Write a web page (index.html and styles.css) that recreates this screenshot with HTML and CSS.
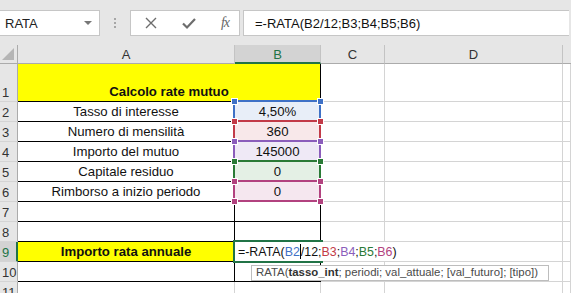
FILE: index.html
```html
<!DOCTYPE html>
<html lang="it">
<head>
  <meta charset="UTF-8">
  <title>Calcolo rate mutuo</title>
  <link rel="stylesheet" href="styles.css">
</head>
<body>
  <div class="bar">
    <div class="namebox">RATA<span class="drop"></span></div>
    <div class="dots"><i></i><i></i><i></i></div>
    <div class="fxbox">
      <svg width="14" height="14" viewBox="0 0 14 14"><path d="M2 2L12 12M12 2L2 12" stroke="#6d6d6d" stroke-width="1.4" fill="none"/></svg>
      <svg width="16" height="14" viewBox="0 0 16 14"><path d="M2 7.5L6 11.5L14 3" stroke="#6d6d6d" stroke-width="2.2" fill="none"/></svg>
      <span class="fx">fx</span>
    </div>
    <div class="formula">=-RATA(B2/12;B3;B4;B5;B6)</div>
  </div>

  <div class="sheet">
    <!-- intestazioni -->
    <div class="corner"><span class="tri"></span></div>
    <div class="ch">A</div>
    <div class="ch sel">B</div>
    <div class="ch">C</div>
    <div class="ch">D</div>
    <div class="ch last"></div>

    <!-- riga 1 -->
    <div class="rh tall">1</div>
    <div class="c span2 center yellow bold bb br">Calcolo rate mutuo</div>
    <div class="c"></div>
    <div class="c"></div>
    <div class="c"></div>

    <!-- righe 2-6 -->
    <div class="rh">2</div>
    <div class="c center bb">Tasso di interesse</div>
    <div class="c center ref blue">4,50%<b class="box"></b><b class="h tl"></b><b class="h tr"></b><b class="h bl"></b><b class="h br2"></b></div>
    <div class="c"></div><div class="c"></div><div class="c"></div>

    <div class="rh">3</div>
    <div class="c center bb">Numero di mensilità</div>
    <div class="c center ref red">360<b class="box"></b><b class="h tl"></b><b class="h tr"></b><b class="h bl"></b><b class="h br2"></b></div>
    <div class="c"></div><div class="c"></div><div class="c"></div>

    <div class="rh">4</div>
    <div class="c center bb">Importo del mutuo</div>
    <div class="c center ref purple">145000<b class="box"></b><b class="h tl"></b><b class="h tr"></b><b class="h bl"></b><b class="h br2"></b></div>
    <div class="c"></div><div class="c"></div><div class="c"></div>

    <div class="rh">5</div>
    <div class="c center bb">Capitale residuo</div>
    <div class="c center ref green">0<b class="box"></b><b class="h tl"></b><b class="h tr"></b><b class="h bl"></b><b class="h br2"></b></div>
    <div class="c"></div><div class="c"></div><div class="c"></div>

    <div class="rh">6</div>
    <div class="c center bb">Rimborso a inizio periodo</div>
    <div class="c center ref magenta">0<b class="box"></b><b class="h tl"></b><b class="h tr"></b><b class="h bl"></b><b class="h br2"></b></div>
    <div class="c"></div><div class="c"></div><div class="c"></div>

    <!-- righe 7-8 -->
    <div class="rh">7</div>
    <div class="c bb br"></div>
    <div class="c bb br"></div>
    <div class="c"></div><div class="c"></div><div class="c"></div>

    <div class="rh">8</div>
    <div class="c bb br"></div>
    <div class="c bb br"></div>
    <div class="c"></div><div class="c"></div><div class="c"></div>

    <!-- riga 9 -->
    <div class="rh act">9</div>
    <div class="c center yellow bold bb br">Importo rata annuale</div>
    <div class="c bb br edit">
      <b class="active"></b>
      <b class="ext"></b>
      <span class="txt">=-RATA(<span class="k1">B2</span><span class="caret"></span>/12;<span class="k2">B3</span>;<span class="k3">B4</span>;<span class="k4">B5</span>;<span class="k5">B6</span>)</span>
      <div class="tip">RATA(<strong>tasso_int</strong>; periodi; val_attuale; [val_futuro]; [tipo])</div>
    </div>
    <div class="c"></div><div class="c"></div><div class="c"></div>

    <!-- riga 10-11 -->
    <div class="rh">10</div>
    <div class="c bb br"></div>
    <div class="c bb br"></div>
    <div class="c"></div><div class="c"></div><div class="c"></div>

    <div class="rh">11</div>
    <div class="c"></div>
    <div class="c"></div>
    <div class="c"></div><div class="c"></div><div class="c"></div>
  </div>
</body>
</html>
```

FILE: styles.css
```css
* { box-sizing: border-box; }
body { margin: 0; background: #e6e6e6; font-family: "Liberation Sans", Arial, sans-serif; width: 571px; height: 293px; overflow: hidden; }

/* barra della formula */
.bar { height: 45px; padding-top: 10px; display: flex; align-items: flex-start; }
.namebox { position: relative; width: 100px; height: 26px; background: #fff; border: 1px solid #c6c6c6; border-left: none; font-size: 13px; color: #222; padding: 5px 0 0 5px; }
.drop { position: absolute; right: 7px; top: 10px; border-left: 4px solid transparent; border-right: 4px solid transparent; border-top: 4px solid #777; }
.dots { width: 30px; height: 26px; display: flex; flex-direction: column; align-items: center; justify-content: center; gap: 2px; }
.dots i { width: 2px; height: 2px; background: #a6a6a6; display: block; }
.fxbox { width: 110px; height: 26px; background: #fff; border: 1px solid #c6c6c6; display: flex; align-items: center; justify-content: space-between; padding: 0 10px 0 13px; }
.fx { font-family: "Liberation Serif", serif; font-style: italic; font-size: 14px; color: #666; letter-spacing: -1px; }
.formula { flex: 1; margin-left: 3px; margin-right: 2px; height: 26px; background: #fff; border: 1px solid #c6c6c6; border-right: none; font-size: 13px; color: #111; padding: 5px 0 0 11px; }

/* foglio */
.sheet { display: grid; grid-template-columns: 18px 217px 86px 64px 178px 8px; grid-template-rows: 19px 38px repeat(10, 20px); background: #fff; }
.corner { position: relative; background: #e6e6e6; border-right: 1px solid #ababab; border-bottom: 1px solid #ababab; }
.tri { position: absolute; right: 3px; bottom: 3px; border-left: 12px solid transparent; border-bottom: 12px solid #b5b5b5; }
.ch { background: #e6e6e6; border-right: 1px solid #c3c3c3; border-bottom: 1px solid #ababab; font-size: 13px; color: #333; text-align: center; padding-top: 2px; }
.ch.sel { background: #d3d3d3; color: #217346; border-bottom: 2px solid #217346; }
.ch.last { border-right: none; }
.rh { background: #e6e6e6; border-right: 1px solid #ababab; border-bottom: 1px solid #d4d4d4; font-size: 13px; color: #333; padding: 3px 0 0 2px; }
.rh.tall { padding-top: 21px; }
.rh.act { background: #d3d3d3; color: #217346; border-right: 2px solid #217346; }

.c { border-right: 1px solid #d4d4d4; border-bottom: 1px solid #d4d4d4; font-size: 13.2px; color: #111; display: flex; align-items: flex-end; padding-bottom: 2px; white-space: nowrap; }
.center { justify-content: center; }
.bold { font-weight: bold; }
.span2 { grid-column: span 2; }
.yellow { background: #ffff00; }
.bb { border-bottom-color: #000; }
.br { border-right-color: #000; }

/* riferimenti colorati */
.ref { position: relative; }
.ref .box { position: absolute; left: -2px; top: -2px; right: -1px; bottom: -1px; border: 2px solid var(--k); }
.ref .h { position: absolute; width: 5px; height: 5px; background: var(--k); box-shadow: 0 0 0 1px #fff; z-index: 1; }
.ref .tl { left: -3px; top: -3px; }
.ref .tr { right: -3px; top: -3px; }
.ref .bl { left: -3px; bottom: -3px; }
.ref .br2 { right: -3px; bottom: -3px; }
.blue { --k: #3f71c6; background: #e8eef8; }
.red { --k: #c23a48; background: #f8e8ea; }
.purple { --k: #8b5dbb; background: #efe9f6; }
.green { --k: #2a7a36; background: #e4f0e5; }
.magenta { --k: #b2427f; background: #f5e7ef; }

/* cella in modifica */
.edit { position: relative; z-index: 2; }
.active { position: absolute; left: -2px; top: -2px; width: 90px; height: 23px; border: 2px solid #217346; }
.ext { position: absolute; left: 84px; top: 0; width: 86px; height: 19px; background: #fff; }
.txt { position: absolute; left: 3px; bottom: 2px; font-size: 12.4px; color: #111; }
.caret { display: inline-block; width: 1px; height: 15px; background: #000; vertical-align: -3px; }
.k1 { color: #3f71c6; }
.k2 { color: #c23a48; }
.k3 { color: #8b5dbb; }
.k4 { color: #2a7a36; }
.k5 { color: #b2427f; }
.tip { position: absolute; left: 16px; top: 23px; width: 298px; height: 16px; background: #fff; border: 1px solid #bdbdbd; font-size: 11.4px; color: #4a4a4a; padding: 0 0 0 4px; white-space: nowrap; }
.tip strong { color: #333; }
```
